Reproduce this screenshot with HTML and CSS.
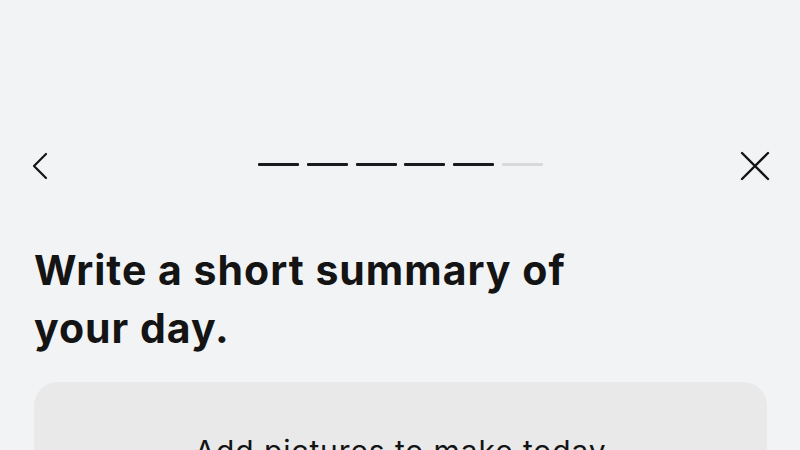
FILE: index.html
```html
<!DOCTYPE html>
<html lang="en">
<head>
<meta charset="utf-8">
<title>Summary</title>
<link rel="stylesheet" href="styles.css">
</head>
<body>
<div class="screen">
  <header class="topbar">
    <button class="icon-btn back" aria-label="Back">
      <svg width="16" height="28" viewBox="0 0 16 28" fill="none"><path d="M14 2 L2 14 L14 26" stroke="#141414" stroke-width="2.2" stroke-linecap="round" stroke-linejoin="round"/></svg>
    </button>
    <div class="progress">
      <span class="seg done"></span>
      <span class="seg done"></span>
      <span class="seg done"></span>
      <span class="seg done"></span>
      <span class="seg done"></span>
      <span class="seg"></span>
    </div>
    <button class="icon-btn close" aria-label="Close">
      <svg width="30" height="30" viewBox="0 0 30 30" fill="none"><path d="M2 2 L28 28 M28 2 L2 28" stroke="#141414" stroke-width="2.4" stroke-linecap="round"/></svg>
    </button>
  </header>
  <main class="content">
    <h1 class="title">Write a short summary of<br>your day.</h1>
    <section class="card">
      <p class="card-text">Add pictures to make today</p>
    </section>
  </main>
</div>
</body>
</html>
```
FILE: styles.css
```css
html, body {
  margin: 0;
  padding: 0;
  background: #f2f3f4;
  height: 100%;
  overflow: hidden;
}
.screen {
  font-family: Inter, "Liberation Sans", sans-serif;
  color: #141414;
  width: 800px;
}
.topbar {
  margin-top: 151px;
  height: 30px;
  padding: 0 30px 0 32px;
  display: flex;
  align-items: center;
  justify-content: space-between;
}
.icon-btn {
  background: none;
  border: 0;
  padding: 0;
  margin: 0;
  display: flex;
  align-items: center;
}
.progress {
  display: flex;
  gap: 7.7px;
  margin-top: -3px;
  margin-left: 13px;
}
.seg {
  width: 41px;
  height: 3px;
  background: #d9d9db;
  border-radius: 1px;
}
.seg.done {
  background: #1a1a1a;
}
.content {
  padding: 0 33px 0 34px;
}
.title {
  margin: 60px 0 0;
  font-size: 41px;
  line-height: 58px;
  font-weight: 700;
  letter-spacing: 1px;
}
.card {
  margin-top: 25px;
  background: #e9e9ea;
  border-radius: 24px;
  padding: 51px 20px 60px;
  text-align: center;
}
.card-text {
  margin: 0;
  font-size: 30px;
  line-height: 36px;
  font-weight: 400;
  letter-spacing: 0.9px;
}
```
